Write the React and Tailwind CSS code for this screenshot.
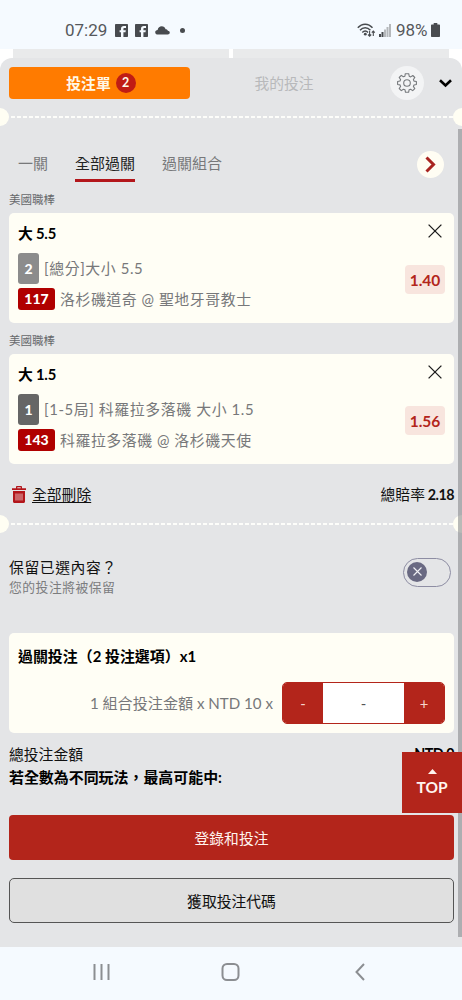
import React, { useState } from "react";

const bets = [
  {
    league: "美國職棒",
    pick: "大 5.5",
    count: "2",
    countClass: "bg-[#8c8c8c]",
    market: "[總分]大小 5.5",
    code: "117",
    match: "洛杉磯道奇 @ 聖地牙哥教士",
    odds: "1.40",
  },
  {
    league: "美國職棒",
    pick: "大 1.5",
    count: "1",
    countClass: "bg-[#666666]",
    market: "[1-5局] 科羅拉多落磯 大小 1.5",
    code: "143",
    match: "科羅拉多落磯 @ 洛杉磯天使",
    odds: "1.56",
  },
];

const tabs = ["一關", "全部過關", "過關組合"];

function FacebookIcon() {
  return (
    <svg width="13" height="13" viewBox="0 0 13 13">
      <rect width="13" height="13" rx="0.8" fill="#484b4f" />
      <path
        d="M6 13V8.2H4.6V6.3H6V4.7C6 2.9 7.1 2 8.8 2H11V4H9.5C8.7 4 8.4 4.3 8.4 4.9V6.3H10.8L10.5 8.2H8.4V13Z"
        fill="#f5faff"
      />
    </svg>
  );
}

function StatusBar() {
  return (
    <div className="flex h-[49px] shrink-0 items-start justify-between bg-[#f5faff] pt-5 pr-[22px] pl-[65px] font-['Roboto',sans-serif] text-[17px] leading-[20px] text-[#55585c]">
      <div className="flex h-5 items-center">
        <span className="w-[50px] text-[17px]">07:29</span>
        <FacebookIcon />
        <span className="w-[7px]" />
        <FacebookIcon />
        <svg className="mt-px ml-[7px]" width="15" height="9" viewBox="0 0 15 9">
          <path
            d="M3 8.5C1.3 8.5.2 7.6.2 6.2.2 4.8 1.3 4 2.6 3.9 3.1 1.7 4.7.3 6.7.3 8.6.3 10.1 1.5 10.6 3.2 11.3 3 12.5 3.5 12.8 4.7 14 4.8 14.8 5.5 14.8 6.6 14.8 7.8 13.9 8.5 12.7 8.5Z"
            fill="#484b4f"
          />
        </svg>
        <span className="ml-[10px] size-[5px] rounded-full bg-[#484b4f]" />
      </div>
      <div className="flex h-5 items-center">
        <svg width="19" height="15" viewBox="0 0 19 15" fill="none" stroke="#484b4f">
          <path d="M.8 4.8C5-.1 11.3-.1 15.5 4.8M3 7.3C6 3.8 10.3 3.8 13.4 7.3M5.3 9.6C7.1 7.6 9.3 7.6 11 9.6" strokeWidth="1.5" />
          <circle cx="8.3" cy="11.2" r="1.4" fill="#484b4f" stroke="none" />
          <path d="M12.6 8V13M11 11.5L12.6 13.2L14.2 11.5M16.3 13V8M14.8 9.6L16.3 8L17.8 9.6" strokeWidth="1.1" />
        </svg>
        <svg className="ml-[3px]" width="12" height="13" viewBox="0 0 12 13">
          <path d="M0 10H2V13H0ZM2.5 8H4.5V13H2.5Z" fill="#484b4f" />
          <path d="M5 5.5H7V13H5ZM7.5 3H9.5V13H7.5ZM10 0H12V13H10Z" fill="#b5b8bb" />
        </svg>
        <span className="ml-[5px] w-[35px] text-[17px]">98%</span>
        <svg width="9" height="14" viewBox="0 0 9 14">
          <path d="M2.7 0H6.3V1.4H8C8.6 1.4 9 1.8 9 2.4V13C9 13.6 8.6 14 8 14H1C.4 14 0 13.6 0 13V2.4C0 1.8.4 1.4 1 1.4H2.7Z" fill="#484b4f" />
        </svg>
      </div>
    </div>
  );
}

// Ticket style perforation between two sections
function Divider() {
  return (
    <div className="flex h-[18px] items-center justify-between overflow-hidden">
      <span className="-ml-[9px] size-[18px] shrink-0 rounded-full bg-[#fffef3]" />
      <span className="ml-[2px] h-[2px] flex-1 bg-[repeating-linear-gradient(90deg,#fdfdfa_0_4px,#e4e5e7_4px_6px)]" />
      <span className="-mr-[9px] size-[18px] shrink-0 rounded-full bg-[#fffef3]" />
    </div>
  );
}

function BetCard({ bet }) {
  return (
    <div>
      <p className="flex h-[26px] items-center text-[11.5px] text-[#66686b]">{bet.league}</p>
      <div className="flex h-[110px] justify-between rounded-[5px] bg-[#fffef5] pr-[9px] pl-[9px]">
        <div>
          <p className="mt-[10px] h-5 text-[14.8px] leading-5 font-bold tracking-[-0.2px] text-black">{bet.pick}</p>
          <div className="mt-[10px] flex h-[31px] items-center">
            <span className={`flex h-[31px] w-[21px] items-center justify-center rounded-[3px] text-[14px] font-black text-white ${bet.countClass}`}>
              {bet.count}
            </span>
            <span className="mb-[2px] ml-[5px] text-[14.9px] tracking-[0.6px] whitespace-nowrap text-[#77787a]">{bet.market}</span>
          </div>
          <div className="mt-1 flex h-[22px] items-center">
            <span className="flex h-[22px] w-[37px] items-center justify-center rounded-[3px] bg-[#b00000] text-[14px] font-black text-white">
              {bet.code}
            </span>
            <span className="ml-[5px] text-[14.9px] tracking-[0.55px] whitespace-nowrap text-[#77787a]">{bet.match}</span>
          </div>
        </div>
        <div className="flex flex-col items-end">
          <button className="mt-[11px] mr-[3px]">
            <svg width="14" height="14" viewBox="0 0 14 14" stroke="#1c1c1c" strokeWidth="1.3">
              <path d="M.6.6L13.4 13.4M13.4.6L.6 13.4" />
            </svg>
          </button>
          <span className="mt-[27px] flex h-[29px] w-10 items-center justify-center rounded-[4px] bg-[#f8e5de] text-[15.5px] font-bold text-[#b3251b]">
            {bet.odds}
          </span>
        </div>
      </div>
    </div>
  );
}

function App() {
  const [activeTab, setActiveTab] = useState(1);

  return (
    <div className="relative flex h-[1000px] w-[462px] flex-col overflow-hidden bg-white font-['Lato','Noto_Sans_CJK_TC',sans-serif] text-[14.8px] leading-5 text-[#111]">
      <StatusBar />

      <div className="flex h-[9px] shrink-0 gap-1 px-[13px]">
        <span className="flex-1 bg-[#e9eaeb]" />
        <span className="flex-1 bg-[#e9eaeb]" />
      </div>
      <div className="-mb-[889px] h-[889px] shrink-0 rounded-t-[12px] bg-[#e4e5e7]" />

      <div className="h-[889px] shrink-0">
        {/* Header */}
        <div className="flex h-[50px] items-center pl-[9px]">
          <button className="flex h-8 w-[181px] items-center justify-center rounded-[4px] bg-[#ff7b00] pl-[3px] font-bold text-[#fff8e8]">
            投注單
            <span className="ml-[5px] flex size-5 items-center justify-center rounded-full bg-[#c01c14] text-[12.5px]">2</span>
          </button>
          <button className="w-[188px] text-[#b8b9bb]">我的投注</button>
          <button className="ml-[12px] flex size-[34px] items-center justify-center rounded-full bg-[#f3f4f5]">
            <svg width="20" height="20" viewBox="0 0 20 20" fill="none" stroke="#777a7d" strokeWidth="1.1" strokeLinejoin="round">
              <path d="M8.3.7H11.7L12.2 3.2L13.7 3.9L15.8 2.5L17.8 4.5L16.4 6.5L17 8.1L19.4 8.5V11.5L17 12L16.4 13.5L17.8 15.6L15.7 17.6L13.6 16.2L12.1 16.8L11.6 19.3H8.5L8 16.8L6.4 16.2L4.3 17.6L2.2 15.5L3.6 13.5L3 11.9L.6 11.5V8.5L3 8L3.6 6.5L2.2 4.5L4.3 2.4L6.3 3.8L7.9 3.2Z" />
              <circle cx="10" cy="10" r="3.3" />
            </svg>
          </button>
          <button className="ml-[15px]">
            <svg width="13" height="9" viewBox="0 0 13 9" fill="none" stroke="#000" strokeWidth="2.6">
              <path d="M1 1.3L6.5 6.5L12 1.3" />
            </svg>
          </button>
        </div>
        <Divider />

        {/* Tabs */}
        <div className="mt-[20px] flex h-[41px] items-start pr-[18px] pl-[18px]">
          {tabs.map((tab, index) => (
            <button
              key={tab}
              onClick={() => setActiveTab(index)}
              className={`mr-[27px] h-[36px] border-b-[3px] text-[15px] ${
                activeTab === index
                  ? "border-[#b3161b] text-[#222]"
                  : "border-transparent text-[#77787a]"
              }`}
            >
              {tab}
            </button>
          ))}
          <button className="mt-[5px] ml-auto flex size-[27px] items-center justify-center rounded-full bg-[#fffdf3]">
            <svg width="11" height="17" viewBox="0 0 11 17" fill="none" stroke="#a82320" strokeWidth="3">
              <path d="M1.5 1.5L8.5 8.5L1.5 15.5" />
            </svg>
          </button>
        </div>

        {/* Selected bets */}
        <div className="pr-2 pl-[9px]">
          <div className="flex flex-col gap-[5px]">
            {bets.map((bet) => (
              <BetCard key={bet.code} bet={bet} />
            ))}
          </div>
          <div className="flex h-[51px] items-center justify-between pt-[9px]">
            <button className="flex items-center">
              <svg className="mr-[6px] ml-[3px]" width="14" height="17" viewBox="0 0 14 17">
                <path fillRule="evenodd" d="M0 2.2H4V.8C4 .3 4.4 0 4.9 0H9.1C9.6 0 10 .3 10 .8V2.2H14V4H0ZM5.3 1.2V2.2H8.7V1.2ZM1 5H13V15.5C13 16.3 12.4 17 11.5 17H2.5C1.6 17 1 16.3 1 15.5Z" fill="#b3161b" />
                <path d="M4 7.5V14.5M6 7.5V14.5M8 7.5V14.5M10 7.5V14.5" stroke="#f0dcdc" strokeWidth="0.8" />
              </svg>
              <span className="underline underline-offset-2">全部刪除</span>
            </button>
            <p>
              總賠率 <b className="-ml-px text-[14.3px] tracking-[-0.5px]">2.18</b>
            </p>
          </div>
        </div>
        <Divider />

        {/* Keep selection */}
        <div className="flex h-[100px] items-start justify-between pt-[24px] pr-[11px] pl-[9px]">
          <div>
            <p className="tracking-[0.6px]">保留已選內容？</p>
            <p className="text-[12.8px] tracking-[0.5px] text-[#7b7c7e]">您的投注將被保留</p>
          </div>
          <button className="mt-px flex h-[29px] w-[48px] items-center rounded-full border border-[#8d8da3] pb-[2px] pl-[3px]">
            <span className="flex size-5 items-center justify-center rounded-full bg-[#696982]">
              <svg width="9" height="9" viewBox="0 0 9 9" stroke="#f1f1f5" strokeWidth="1.1">
                <path d="M.5.5L8.5 8.5M8.5.5L.5 8.5" />
              </svg>
            </span>
          </button>
        </div>

        {/* Stake */}
        <div className="pr-2 pl-[9px]">
          <div className="h-[100px] rounded-[5px] bg-[#fffef5] px-[9px] pt-[13px]">
            <p className="text-[14.95px] font-bold text-black">過關投注（2 投注選項）x1</p>
            <div className="mt-[16px] flex h-[42px] items-center justify-end">
              <span className="mr-[9px] mb-px text-[15.1px] text-[#77787a]">1 組合投注金額 x NTD 10 x</span>
              <div className="flex h-[42px] w-[163px] overflow-hidden rounded-[5px] border border-[#b3251b] bg-white">
                <button className="w-10 bg-[#b3251b] text-[#f5d5cc]">-</button>
                <span className="flex flex-1 items-center justify-center text-[#555]">-</span>
                <button className="w-10 bg-[#b3251b] text-[#f5d5cc]">+</button>
              </div>
            </div>
          </div>
          <div className="mt-[11px] flex h-[20px] items-center justify-between">
            <p>總投注金額</p>
            <b className="text-[14.3px] tracking-[-0.5px] text-black">NTD 0</b>
          </div>
          <p className="mt-[3px] h-5 text-[14.95px] font-bold text-black">若全數為不同玩法，最高可能中:</p>
          <button className="mt-[28px] h-[45px] w-full rounded-[4px] bg-[#b3251b] text-[#fff4ee]">登錄和投注</button>
          <button className="mt-[18px] h-[45px] w-full rounded-[5px] border border-[#555] bg-[#e0e0e0]">獲取投注代碼</button>
        </div>
      </div>

      {/* Phone navigation */}
      <div className="flex h-[53px] shrink-0 items-start bg-[#f5faff] pt-[16px] pl-[93px]">
        <svg width="17" height="18" viewBox="0 0 17 18" stroke="#8b8e92" strokeWidth="2">
          <path d="M1.5 1V17M8.5 1V17M15.5 1V17" />
        </svg>
        <svg className="ml-[111px]" width="19" height="18" viewBox="0 0 19 18" fill="none" stroke="#8b8e92" strokeWidth="2">
          <rect x="1.5" y="1" width="16" height="16" rx="4.5" />
        </svg>
        <svg className="ml-[115px]" width="10" height="18" viewBox="0 0 10 18" fill="none" stroke="#8b8e92" strokeWidth="2">
          <path d="M9 1L1.5 9L9 17" />
        </svg>
      </div>

      {/* Scrollbar and floating button lie over the panel */}
      <div className="absolute top-[129px] right-0 h-[808px] w-1 bg-[#808285]/55" />
      <button className="absolute top-[752px] right-0 flex h-[61px] w-[60px] flex-col items-center bg-[#b3251b] pt-[17px] text-[15.5px] font-bold text-[#fff4ee]">
        <svg width="9" height="5" viewBox="0 0 9 5" fill="#fff4ee">
          <path d="M4.5 0L9 5H0Z" />
        </svg>
        <span className="mt-[3px]">TOP</span>
      </button>
    </div>
  );
}

export default App;
